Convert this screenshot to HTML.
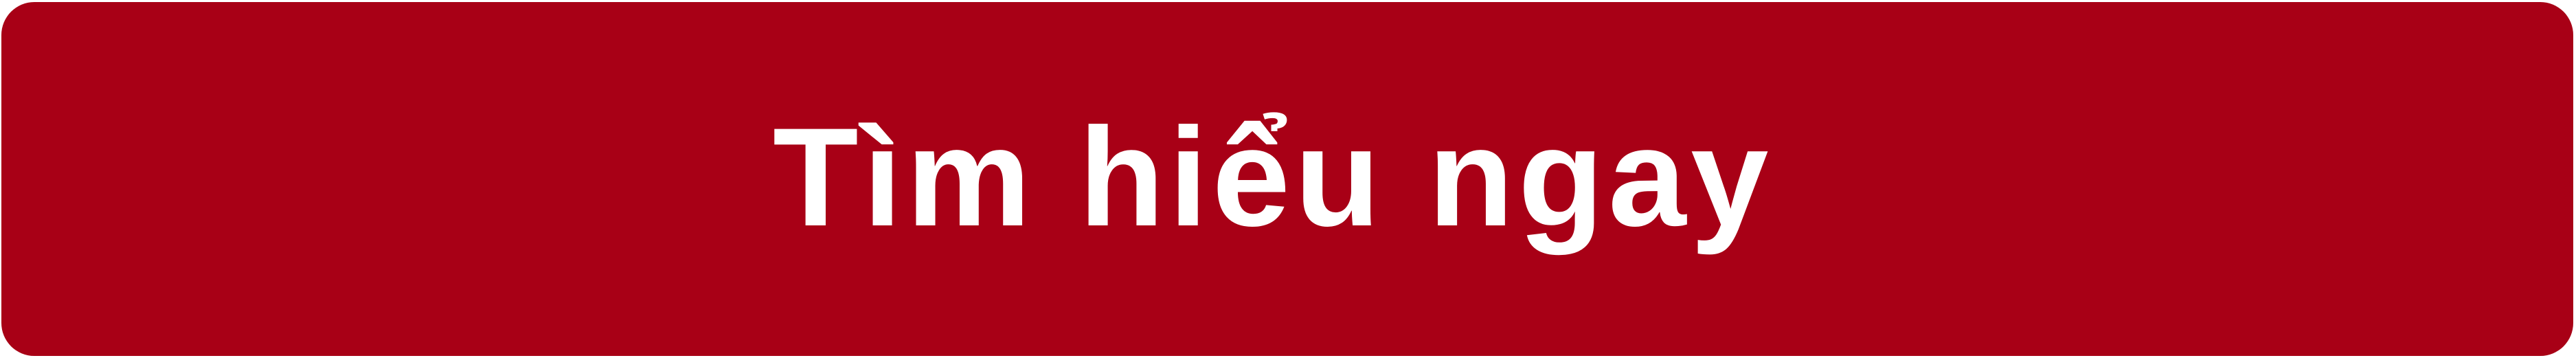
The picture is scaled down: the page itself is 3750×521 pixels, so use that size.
<!DOCTYPE html>
<html><head><meta charset="utf-8"><style>
html,body{margin:0;padding:0;width:3750px;height:521px;background:#fff;overflow:hidden}
.b{position:absolute;left:2px;top:3px;width:3744px;height:515px;background:#a80016;border-radius:48px;}
.t{position:absolute;left:-22px;width:3750px;top:-2px;height:521px;line-height:521px;text-align:center;color:#fff;font-family:"Liberation Sans",sans-serif;font-weight:bold;font-size:204px;letter-spacing:6.5px;}
</style></head><body>
<div class="b"></div>
<div class="t">Tìm hiểu ngay</div>
</body></html>
